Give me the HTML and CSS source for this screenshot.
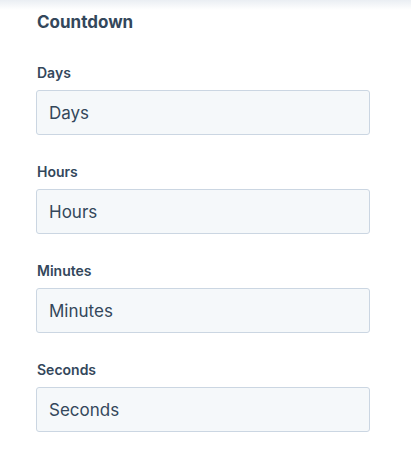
FILE: index.html
```html
<!DOCTYPE html>
<html>
<head>
<meta charset="utf-8">
<link rel="stylesheet" href="styles.css">
</head>
<body>
<div class="topshade"></div>
<div class="panel">
  <h2 class="title">Countdown</h2>
  <div class="field">
    <label class="label">Days</label>
    <div class="input">Days</div>
  </div>
  <div class="field">
    <label class="label">Hours</label>
    <div class="input">Hours</div>
  </div>
  <div class="field">
    <label class="label">Minutes</label>
    <div class="input">Minutes</div>
  </div>
  <div class="field">
    <label class="label">Seconds</label>
    <div class="input">Seconds</div>
  </div>
</div>
</body>
</html>
```
FILE: styles.css
```css
html, body {
  margin: 0;
  padding: 0;
  background: #ffffff;
}
body {
  font-family: "Inter", "Noto Sans", sans-serif;
  color: #33475b;
}
.topshade {
  height: 10px;
  background: linear-gradient(to bottom, #eaeef3, #ffffff);
}
.panel {
  padding: 0 41px 0 36px;
  display: flex;
  flex-direction: column;
}
.title {
  margin: 0 0 0 1px;
  font-size: 17px;
  line-height: 24px;
  font-weight: 700;
}
.field {
  display: flex;
  flex-direction: column;
  margin-top: 27px;
}
.field:first-of-type {
  margin-top: 29px;
}
.label {
  font-size: 14px;
  line-height: 20px;
  font-weight: 600;
  margin: 0 0 7px 1px;
}
.input {
  box-sizing: border-box;
  height: 45px;
  background: #f5f8fa;
  border: 1px solid #cbd6e2;
  border-radius: 3px;
  padding: 0 12px;
  display: flex;
  align-items: center;
  font-size: 17px;
  font-weight: 400;
  color: #33475b;
}
```
